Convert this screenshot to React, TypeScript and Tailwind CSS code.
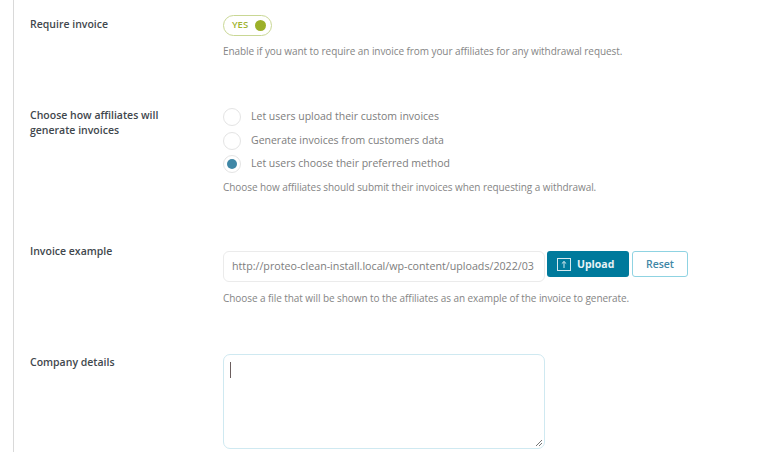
import { ReactNode } from 'react'

const RADIOS = [
  { label: 'Let users upload their custom invoices', checked: false },
  { label: 'Generate invoices from customers data', checked: false },
  { label: 'Let users choose their preferred method', checked: true },
]

function Row({ label, children, className }: { label: ReactNode; children: ReactNode; className: string }) {
  return (
    <div className={`flex ${className}`}>
      <div className="w-[193px] shrink-0 pt-px text-[10.5px] leading-[15px] font-semibold text-[#3f474d]">{label}</div>
      <div className="flex-1">{children}</div>
    </div>
  )
}

function Help({ children, className = '' }: { children: ReactNode; className?: string }) {
  return <p className={`text-[10px] leading-[14px] tracking-[-0.07px] text-[#858585] ${className}`}>{children}</p>
}

export default function App() {
  return (
    <div className="h-[452px] w-[769px] overflow-hidden bg-white font-['Open_Sans',sans-serif]">
      <div className="ml-[13px] h-full border-l border-[#d9d9d9] pl-[16px]">
        <Row label="Require invoice" className="pt-[16px]">
          <div className="-mt-[1px] flex h-[21px] w-[49px] items-center justify-between rounded-full border border-[#c9d794] pl-[8px] pr-[5px]">
            <span className="text-[9.5px] font-semibold text-[#a0b32e]">YES</span>
            <span className="h-[11px] w-[11px] rounded-full bg-[#9cb029]" />
          </div>
          <Help className="mt-[8px]">Enable if you want to require an invoice from your affiliates for any withdrawal request.</Help>
        </Row>

        <Row
          label={<>Choose how affiliates will<br />generate invoices</>}
          className="pt-[49px]"
        >
          <div className="mt-[1px] flex flex-col gap-[5.5px]">
            {RADIOS.map(r => (
              <div key={r.label} className="flex h-[18px] items-center gap-[10px]">
                <span className="flex h-[18px] w-[18px] items-center justify-center rounded-full border border-[#e4e4e4] bg-white">
                  {r.checked && <span className="h-[10px] w-[10px] rounded-full bg-[#3f87a6]" />}
                </span>
                <span className="text-[10.5px] text-[#7d7d7d]">{r.label}</span>
              </div>
            ))}
          </div>
          <Help className="mt-[7px]">Choose how affiliates should submit their invoices when requesting a withdrawal.</Help>
        </Row>

        <Row label="Invoice example" className="pt-[49px]">
          <div className="mt-[8px] flex items-start">
            <div className="flex h-[31px] w-[322px] items-center overflow-hidden rounded-[6px] border border-[#ebebeb] px-[8px] text-[10.7px] whitespace-nowrap text-[#7d7d7d]">
              http://proteo-clean-install.local/wp-content/uploads/2022/03
            </div>
            <button className="ml-[2px] flex h-[26px] w-[82px] items-center gap-[6px] rounded-[3px] bg-[#007a9c] pt-px pl-[10px] text-[10.5px] font-bold text-[#e8f3f6]">
              <svg width="14" height="13" viewBox="0 0 14 13" fill="none" stroke="#d5e9ef" strokeWidth="1">
                <rect x="0.5" y="0.5" width="13" height="12" />
                <path d="M7 10V3.5M4.8 5.6 7 3.5l2.2 2.1" />
              </svg>
              Upload
            </button>
            <button className="ml-[3px] h-[26px] w-[56px] rounded-[3px] border border-[#8fd3e2] pt-px text-[10.5px] font-semibold text-[#3f87a6]">
              Reset
            </button>
          </div>
          <Help className="mt-[9px]">Choose a file that will be shown to the affiliates as an example of the invoice to generate.</Help>
        </Row>

        <Row label="Company details" className="pt-[49px]">
          <div className="relative h-[95px] w-[322px] rounded-[7px] border border-[#cfe9f1] bg-white">
            <span className="absolute top-[7px] left-[6px] h-[16px] w-px bg-[#6b5f5f]" />
            <svg className="absolute right-[1px] bottom-[1px]" width="8" height="8" viewBox="0 0 8 8" stroke="#777" strokeWidth="1">
              <path d="M1 7 7 1M4 7l3-3" />
            </svg>
          </div>
        </Row>
      </div>
    </div>
  )
}
